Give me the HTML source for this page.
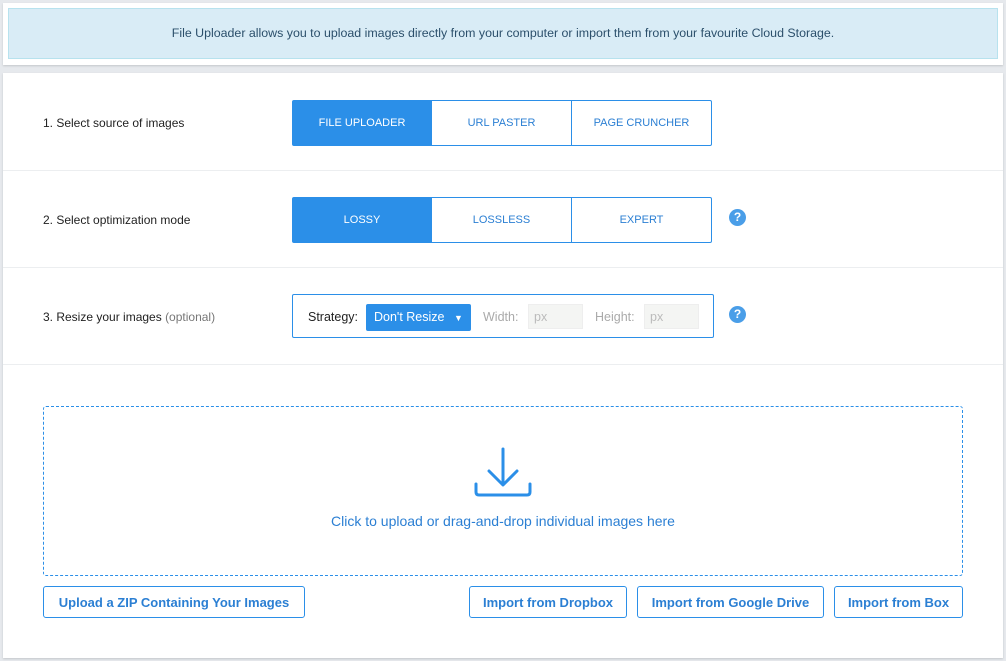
<!DOCTYPE html>
<html><head><style>
*{box-sizing:border-box;margin:0;padding:0}
body{width:1006px;height:661px;background:#e6e9ed;font-family:"Liberation Sans",sans-serif;position:relative;overflow:hidden}
.card{position:absolute;left:3px;width:1000px;background:#fff;box-shadow:0 1px 2px rgba(0,0,0,.15)}
.info{position:absolute;left:5px;top:5px;width:990px;height:51px;background:#d9ecf6;border:1px solid #b7e2ee;color:#2b4f6b;font-size:12.4px;text-align:center;line-height:49px}
.row{position:absolute;left:0;width:1000px;border-bottom:1px solid #eceef0}
.lbl{position:absolute;left:40px;font-size:12px;color:#222}
.seg{position:absolute;left:289px;display:flex;border:1px solid #2b8fe8;border-radius:2px;height:46px}
.seg div{width:140px;text-align:center;line-height:44px;font-size:11px;color:#2b7fd3;border-left:1px solid #2b8fe8}
.seg div:first-child{border-left:none;background:#2b8fe8;color:#fff;width:138px}
.q{position:absolute;left:726px;width:17px;height:17px;border-radius:50%;background:#4a9ee8;color:#fff;font-size:12px;font-weight:bold;text-align:center;line-height:17px}
.btn{position:absolute;top:586px;height:32px;border:1px solid #2b8fe8;border-radius:3px;color:#2b7fd3;font-weight:bold;font-size:13px;line-height:31px;text-align:center;background:#fff}
</style></head><body>
<div class="card" style="top:3px;height:62px"><div class="info">File Uploader allows you to upload images directly from your computer or import them from your favourite Cloud Storage.</div></div>
<div class="card" style="top:73px;height:585px">
 <div class="row" style="top:0;height:98px"><div class="lbl" style="top:43px">1. Select source of images</div>
  <div class="seg" style="top:27px"><div>FILE UPLOADER</div><div>URL PASTER</div><div>PAGE CRUNCHER</div></div></div>
 <div class="row" style="top:98px;height:97px"><div class="lbl" style="top:42px">2. Select optimization mode</div>
  <div class="seg" style="top:26px"><div>LOSSY</div><div>LOSSLESS</div><div>EXPERT</div></div>
  <div class="q" style="top:38px">?</div></div>
 <div class="row" style="top:195px;height:97px"><div class="lbl" style="top:42px">3. Resize your images <span style="color:#777">(optional)</span></div>
  <div style="position:absolute;left:289px;top:26px;width:422px;height:44px;border:1px solid #2b8fe8;border-radius:2px;font-size:12.5px">
   <span style="position:absolute;left:15px;top:15px;color:#222">Strategy:</span>
   <div style="position:absolute;left:73px;top:9px;width:105px;height:27px;background:#2b8fe8;border-radius:2px;color:#fff;line-height:27px;padding-left:8px">Don't Resize <span style="font-size:9px;margin-left:6px">▼</span></div>
   <span style="position:absolute;left:190px;top:15px;color:#aaa">Width:</span>
   <div style="position:absolute;left:235px;top:9px;width:55px;height:25px;background:#f4f5f3;border:1px solid #eee;color:#bbb;padding:5px">px</div>
   <span style="position:absolute;left:302px;top:15px;color:#aaa">Height:</span>
   <div style="position:absolute;left:351px;top:9px;width:55px;height:25px;background:#f4f5f3;border:1px solid #eee;color:#bbb;padding:5px">px</div>
  </div>
  <div class="q" style="top:38px">?</div></div>
 <div style="position:absolute;left:40px;top:333px;width:920px;height:170px;border:1px dashed #2b8fe8;border-radius:3px">
  <svg style="position:absolute;left:429px;top:40px" width="60" height="54" viewBox="0 0 60 54"><g fill="none" stroke="#2b8fe8" stroke-width="3" stroke-linecap="round" stroke-linejoin="round"><path d="M30 2V36M16 24L30 38L44 24M3 37V45Q3 48 6 48H54Q57 48 57 45V37"/></g></svg>
  <div style="position:absolute;top:106px;width:100%;text-align:center;color:#2b7fd3;font-size:14px">Click to upload or drag-and-drop individual images here</div>
 </div>
</div>
<div class="btn" style="left:43px;width:262px">Upload a ZIP Containing Your Images</div>
<div class="btn" style="left:469px;width:158px">Import from Dropbox</div>
<div class="btn" style="left:637px;width:187px">Import from Google Drive</div>
<div class="btn" style="left:834px;width:129px">Import from Box</div>
</body></html>
